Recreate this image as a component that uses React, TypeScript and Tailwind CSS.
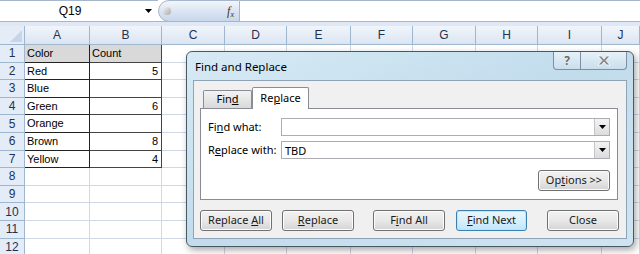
import React from "react";

const colW = [
  "w-[25px]",
  "w-[65px]",
  "w-[72px]",
  "w-[63px]",
  "w-[62px]",
  "w-[64px]",
  "w-[62px]",
  "w-[63px]",
  "w-[62px]",
  "w-[64px]",
  "w-[38px]",
];
const letters = ["A", "B", "C", "D", "E", "F", "G", "H", "I", "J"];

type Row = { a?: string; b?: string };
const data: Row[] = [
  { a: "Color", b: "Count" },
  { a: "Red", b: "5" },
  { a: "Blue" },
  { a: "Green", b: "6" },
  { a: "Orange" },
  { a: "Brown", b: "8" },
  { a: "Yellow", b: "4" },
  {},
  {},
  {},
  {},
  {},
];

const cellFont = { fontFamily: '"Liberation Sans", Arial, sans-serif' };
const uiFont = { fontFamily: '"Noto Sans", "Open Sans", sans-serif' };

function Btn({
  children,
  className,
  focused,
}: {
  children: React.ReactNode;
  className?: string;
  focused?: boolean;
}) {
  return (
    <div
      className={
        "h-[21px] flex items-center justify-center rounded-[3px] border text-[11px] text-[#1a1a1a] " +
        (focused
          ? "border-[#3c7fb1] bg-gradient-to-b from-[#eaf6fd] via-[#d9f0fc] to-[#bee6fd] shadow-[inset_0_0_0_1px_#bfe3f7] "
          : "border-[#707070] bg-gradient-to-b from-[#f2f2f2] via-[#e8e8e8] to-[#d4d4d4] shadow-[inset_0_0_0_1px_#fcfcfc] ") +
        (className || "")
      }
    >
      {children}
    </div>
  );
}

function Combo({ value }: { value?: string }) {
  return (
    <div className="w-[329px] h-[18px] border border-[#abadb3] bg-white flex items-center">
      <div className="flex-1 pl-[3px] text-[11px] text-black leading-none">{value}</div>
      <div className="w-[15px] h-[16px] border-l border-[#c4c4c4] bg-gradient-to-b from-[#f3f3f3] to-[#dcdcdc] flex items-center justify-center">
        <svg width="7" height="4" viewBox="0 0 7 4">
          <path d="M0 0 H7 L3.5 4 Z" fill="#000" />
        </svg>
      </div>
    </div>
  );
}

export default function App() {
  return (
    <div className="relative w-[640px] h-[254px] overflow-hidden bg-white" style={cellFont}>
      {/* Formula bar */}
      <div className="flex h-[22px] bg-white border-b border-[#a5b6cd]">
        <div className="w-[158px] flex items-center border-t border-[#a5b6cd]">
          <div className="w-[140px] text-center text-[12px] text-black">Q19</div>
          <svg width="7" height="4" viewBox="0 0 7 4" className="ml-[5px]">
            <path d="M0 0 H7 L3.5 4 Z" fill="#000" />
          </svg>
        </div>
        <div className="w-[82px] h-[22px] rounded-l-full border border-[#a5b6cd] bg-gradient-to-b from-[#f2f6fb] via-[#dbe5f2] to-[#c8d7eb] flex items-center">
          <div className="ml-[4px] w-[8px] h-[8px] rounded-full bg-gradient-to-br from-[#f4f4f4] to-[#a9a9a9]" />
          <div className="flex-1" />
          <span className="mr-[5px] text-[12px] italic text-[#333]" style={{ fontFamily: '"Liberation Serif", serif' }}>
            f<sub className="text-[8px]">x</sub>
          </span>
        </div>
        <div className="flex-1 border-t border-[#a5b6cd] bg-white" />
      </div>
      <div className="h-[4px] bg-[#dfe8f4]" />

      {/* Column headers */}
      <div className="flex h-[19px]">
        {colW.map((w, i) =>
          i === 0 ? (
            <div key={i} className={w + " h-full bg-[#e4ecf7] border-r border-b border-[#9eb6ce] relative"}>
              <svg width="12" height="12" viewBox="0 0 12 12" className="absolute right-[2px] bottom-[2px]">
                <path d="M12 0 V12 H0 Z" fill="#c5d5ea" />
              </svg>
            </div>
          ) : (
            <div
              key={i}
              className={
                w +
                " h-full flex items-center justify-center text-[12px] text-[#1f3350] bg-gradient-to-b from-[#f1f5fb] to-[#dbe5f2] border-r border-b border-[#9eb6ce]"
              }
            >
              {letters[i - 1]}
            </div>
          )
        )}
      </div>

      {/* Rows */}
      {data.map((r, ri) => {
        const inTable = ri < 7;
        const isHead = ri === 0;
        return (
          <div key={ri} className="flex h-[17.6px]">
            <div className="w-[25px] h-full flex items-center justify-center text-[12px] text-[#1f3350] bg-[#e4ecf7] border-r border-b border-[#9eb6ce]">
              {ri + 1}
            </div>
            <div
              className={
                "w-[65px] h-full flex items-center pl-[2px] text-[11px] text-black " +
                (inTable
                  ? "border-r border-b border-[#222] " + (isHead ? "bg-[#d9d9d9]" : "bg-white")
                  : "border-r border-b border-[#d0d7e5]")
              }
            >
              {r.a}
            </div>
            <div
              className={
                "w-[72px] h-full flex items-center text-[11px] text-black " +
                (isHead ? "justify-start pl-[2px] " : "justify-end pr-[3px] ") +
                (inTable
                  ? "border-r border-b border-[#444] " + (isHead ? "bg-[#d9d9d9]" : "bg-white")
                  : "border-r border-b border-[#d0d7e5]")
              }
            >
              {r.b}
            </div>
            {colW.slice(3).map((w, ci) => (
              <div key={ci} className={w + " h-full border-r border-b border-[#d0d7e5]"} />
            ))}
          </div>
        );
      })}

      {/* Dialog */}
      <div
        className="absolute left-[186px] top-[51px] w-[448px] h-[196px] rounded-[6px] border border-[#4a5866] bg-gradient-to-br from-[#d6eaf5] via-[#c2dcec] to-[#cfe4f1] shadow-[2px_3px_7px_rgba(0,0,0,0.35)] px-[6px] pb-[7px] flex flex-col"
        style={uiFont}
      >
        <div className="h-[28px] flex items-start relative">
          <div className="pl-[2px] pt-[6px] text-[11.5px] text-black">Find and Replace</div>
          <div className="absolute right-[-6px] top-0 flex">
            <div className="w-[28px] h-[18px] border border-t-0 border-[#7e8fa3] rounded-bl-[4px] bg-gradient-to-b from-[#e6f1f8] to-[#c9dfed] flex items-center justify-center">
              <span className="text-[12px] font-bold text-[#6a6a6a] leading-none" style={{ textShadow: "0 0 1px #fff" }}>
                ?
              </span>
            </div>
            <div className="w-[46px] h-[18px] border border-l-0 border-t-0 border-[#7e8fa3] rounded-br-[4px] mr-[6px] bg-gradient-to-b from-[#e6f1f8] to-[#c9dfed] flex items-center justify-center">
              <svg width="14" height="11" viewBox="0 0 14 11">
                <path
                  d="M1 1 H4.5 L7 4 L9.5 1 H13 L9 5.5 L13 10 H9.5 L7 7 L4.5 10 H1 L5 5.5 Z"
                  fill="#8c8c8c"
                  stroke="#fff"
                  strokeWidth="0.8"
                />
              </svg>
            </div>
          </div>
        </div>
        <div className="flex-1 bg-[#f0f0f0] border border-[#8fa3b7] pt-[6px] pl-[6px] flex flex-col">
          <div className="flex items-end h-[21px] pl-[3px] relative z-10">
            <div className="w-[49px] h-[18px] border border-b-0 border-[#898c95] rounded-t-[2px] bg-gradient-to-b from-[#f3f3f3] to-[#d9d9d9] flex items-center justify-center text-[11px] text-black">
              <span>
                Fin<u>d</u>
              </span>
            </div>
            <div className="w-[57px] h-[22px] mb-[-1px] border border-b-0 border-[#898c95] rounded-t-[2px] bg-white flex items-center justify-center text-[11px] text-black">
              <span>
                Re<u>p</u>lace
              </span>
            </div>
          </div>
          <div className="w-[418px] h-[92px] bg-white border border-[#898c95] pl-[7px] pt-[9px] flex flex-col">
            <div className="flex items-center h-[18px]">
              <div className="w-[73px] text-[11px] text-black">
                Fi<u>n</u>d what:
              </div>
              <Combo />
            </div>
            <div className="flex items-center h-[18px] mt-[5px]">
              <div className="w-[73px] text-[11px] text-black">
                R<u>e</u>place with:
              </div>
              <Combo value="TBD" />
            </div>
            <div className="flex mt-[11px] pl-[330px]">
              <Btn className="w-[72px] h-[20px]">
                <span>
                  Op<u>t</u>ions &gt;&gt;
                </span>
              </Btn>
            </div>
          </div>
          <div className="flex mt-[10px]">
            <Btn className="w-[72px]">
              <span>
                Replace <u>A</u>ll
              </span>
            </Btn>
            <Btn className="w-[72px] ml-[10px]">
              <span>
                <u>R</u>eplace
              </span>
            </Btn>
            <Btn className="w-[72px] ml-[19px]">
              <span>
                F<u>i</u>nd All
              </span>
            </Btn>
            <Btn className="w-[71px] ml-[11px]" focused>
              <span>
                <u>F</u>ind Next
              </span>
            </Btn>
            <Btn className="w-[72px] ml-[20px]">Close</Btn>
          </div>
        </div>
      </div>
    </div>
  );
}
